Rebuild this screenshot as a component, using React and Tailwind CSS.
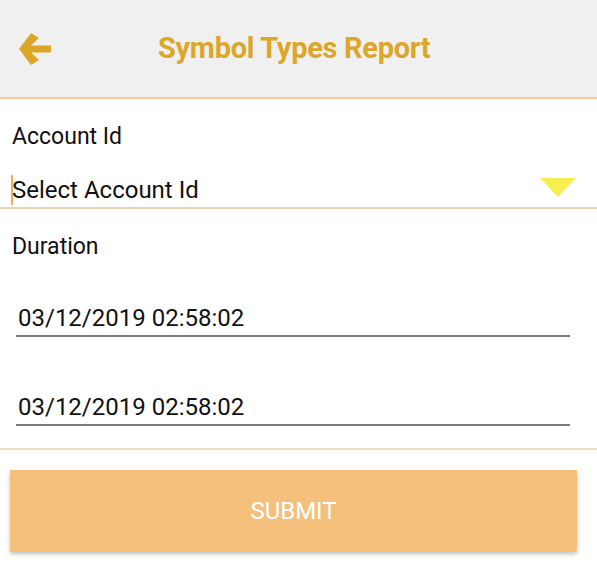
import React from 'react';

export default function App() {
  return (
    <div className="w-[597px] h-[577px] bg-white font-['Roboto',sans-serif] overflow-hidden">
      {/* Header */}
      <div className="h-[99px] bg-[#f0f0f0] border-b-2 border-[#f5c994] flex items-center">
        <div className="w-[72px] pl-[18px] flex items-center">
          <svg width="34" height="36" viewBox="0 0 34 36">
            <path d="M1 18 L13 2 L21 7 L13 14.5 H33 V21.5 H13 L21 29 L13 34 Z" fill="#dca629" />
          </svg>
        </div>
        <h1 className="ml-[86px] text-[29px] font-bold text-[#dca629] tracking-[-0.3px] leading-none -mt-[1px]">
          Symbol Types Report
        </h1>
      </div>

      {/* Account */}
      <div className="px-[12px] pt-[24px]">
        <div className="text-[23px] text-[#111] leading-[28px]">Account Id</div>
      </div>
      <div className="relative flex items-center h-[48px] mt-[10px] border-b-2 border-[#ecd3ad]">
        <span className="absolute left-[11px] top-[14px] w-[2px] h-[30px] bg-[#e8b35a]" />
        <span className="pl-[12px] text-[24px] text-[#111] leading-none mt-[12px]">Select Account Id</span>
        <svg className="ml-auto mr-[21px] mt-[6px]" width="36" height="19" viewBox="0 0 36 19">
          <path d="M0 0 H36 L18 19 Z" fill="#f7ef52" />
        </svg>
      </div>

      {/* Duration */}
      <div className="px-[12px] pt-[24px] pb-[22px] border-b-2 border-[#f2dcbb]">
        <div className="text-[23px] text-[#111] leading-[28px]">Duration</div>
        <div className="mt-[43px] ml-[4px] mr-[15px] border-b-2 border-[#7c7c7c] pb-[2px]">
          <span className="pl-[2px] text-[24px] text-[#111] leading-[28px]">03/12/2019 02:58:02</span>
        </div>
        <div className="mt-[56px] ml-[4px] mr-[15px] border-b-2 border-[#7c7c7c] pb-[2px]">
          <span className="pl-[2px] text-[24px] text-[#111] leading-[28px]">03/12/2019 02:58:02</span>
        </div>
      </div>

      {/* Submit */}
      <div className="pl-[10px] pt-[20px] pr-[20px]">
        <button className="w-full h-[81px] bg-[#f4c07c] text-white text-[24px] font-normal shadow-[0_3px_4px_rgba(0,0,0,0.25)] flex items-center justify-center">
          SUBMIT
        </button>
      </div>
    </div>
  );
}
